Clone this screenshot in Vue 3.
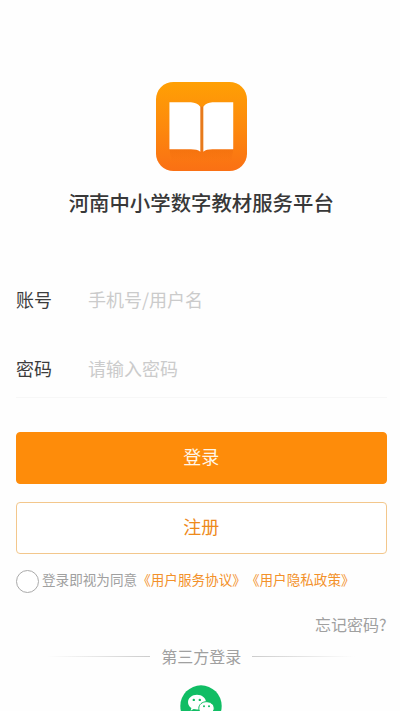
<script setup>
import { ref } from 'vue'

const account = ref('')
const password = ref('')
const agreed = ref(false)
</script>

<template>
  <main class="page">
    <header class="brand">
      <svg class="logo" viewBox="0 0 271 267" preserveAspectRatio="none">
        <defs>
          <linearGradient id="bg" x1="0" y1="0" x2="0" y2="1">
            <stop offset="0" stop-color="#ffa004" />
            <stop offset="0.45" stop-color="#fd8c0c" />
            <stop offset="1" stop-color="#fa7014" />
          </linearGradient>
          <linearGradient id="shade" x1="0" y1="0" x2="0" y2="1">
            <stop offset="0" stop-color="#e8620c" stop-opacity="0.4" />
            <stop offset="1" stop-color="#e8620c" stop-opacity="0" />
          </linearGradient>
        </defs>
        <rect width="271" height="267" rx="52" fill="url(#bg)" />
        <path d="M39 196H231L224 238H46Z" fill="url(#shade)" />
        <path d="M131 74H141V206H131Z" fill="#e77a1c" />
        <path d="M40 61H104Q122 62 132 74V209Q122 202 104 202H40Z" fill="#fff" />
        <path d="M230 61H168Q150 62 141 74V209Q150 202 168 202H230Z" fill="#fff" />
      </svg>
      <h1>河南中小学数字教材服务平台</h1>
    </header>

    <form class="form" @submit.prevent>
      <label class="field">
        <span>账号</span>
        <input v-model="account" type="text" placeholder="手机号/用户名" />
      </label>
      <label class="field lined">
        <span>密码</span>
        <input v-model="password" type="password" placeholder="请输入密码" />
      </label>
      <button class="btn primary" type="submit">登录</button>
      <button class="btn outline" type="button">注册</button>
    </form>

    <div class="agree">
      <button class="radio" :class="{ on: agreed }" type="button" @click="agreed = !agreed"></button>
      <p>登录即视为同意<a>《用户服务协议》</a><a>《用户隐私政策》</a></p>
    </div>
    <a class="forgot">忘记密码?</a>

    <div class="divider">
      <i class="line left"></i>
      <span>第三方登录</span>
      <i class="line right"></i>
    </div>
    <svg class="wechat" viewBox="0 0 42 42">
      <circle cx="21" cy="21" r="20.7" fill="#10bd64" />
      <path d="M17 9.800c-5 0-9 3.300-9 7.400 0 2.400 1.300 4.400 3.400 5.800l-.8 2.700 3.100-1.600c1 .3 2.100.5 3.300.5 5 0 9-3.300 9-7.400s-4-7.400-9-7.400Z" fill="#fff" />
      <path d="M26.500 16.700c-4.300 0-7.700 2.900-7.700 6.500s3.400 6.500 7.700 6.500c.9 0 1.800-.1 2.600-.4l2.600 1.400-.7-2.300c2-1.200 3.200-3.100 3.200-5.200 0-3.600-3.400-6.500-7.700-6.500Z" fill="#fff" stroke="#10bd64" stroke-width="1" />
      <g fill="#10bd64">
        <circle cx="13.800" cy="14.900" r="1.200" />
        <circle cx="19.800" cy="14.900" r="1.200" />
        <circle cx="24" cy="21.200" r="1" />
        <circle cx="29" cy="21.200" r="1" />
      </g>
    </svg>
  </main>
</template>

<style>
body {
  background: #fff;
  overflow: hidden;
}
</style>

<style scoped>
.page {
  box-sizing: border-box;
  display: flex;
  flex-direction: column;
  width: 400px;
  height: 711px;
  padding: 82px 13.5px 0 16px;
  overflow: hidden;
  background: #fefefe;
  font-family: "Noto Sans CJK SC", sans-serif;
}
.brand {
  display: flex;
  flex-direction: column;
  align-items: center;
  flex: none;
  height: 182px;
}
.logo {
  width: 91px;
  height: 89px;
}
h1 {
  margin: 16px 0 0;
  font-size: 20.4px;
  line-height: 30px;
  font-weight: 500;
  color: #383838;
  white-space: nowrap;
}
.form {
  display: flex;
  flex-direction: column;
  flex: none;
}
.field {
  box-sizing: border-box;
  display: flex;
  align-items: center;
  height: 70px;
  padding-bottom: 1px;
  font-size: 18px;
  color: #3c3c3c;
}
.field span {
  width: 72px;
}
.lined {
  height: 64px;
  padding-top: 6px;
  border-bottom: 1px solid #f7f7f7;
  margin-bottom: 34px;
}
input {
  flex: 1;
  min-width: 0;
  padding: 0;
  border: 0;
  outline: 0;
  background: none;
  font: inherit;
}
input::placeholder {
  color: #cbcbcb;
  opacity: 1;
}
.btn {
  box-sizing: border-box;
  height: 52px;
  padding: 0 0 5px;
  border: 1px solid #fe8c0a;
  border-radius: 4px;
  font-family: inherit;
  font-size: 18px;
}
.primary {
  background: #fe8c0a;
  color: #fff6e8;
}
.outline {
  margin-top: 18px;
  border-color: #f3c78c;
  background: #fff;
  color: #ee8a1c;
}
.agree {
  display: flex;
  align-items: center;
  flex: none;
  height: 24px;
  margin-top: 15px;
}
.radio {
  box-sizing: border-box;
  flex: none;
  width: 23px;
  height: 23px;
  padding: 0;
  border: 1px solid #aaa;
  border-radius: 50%;
  background: #fff;
}
.radio.on {
  background: #fe8c0a;
}
.agree p {
  margin: 0 0 5px 3px;
  font-size: 13.6px;
  line-height: 20px;
  color: #a0a0a0;
  white-space: nowrap;
  text-spacing-trim: space-all;
}
.agree a {
  color: #f3912a;
}
.forgot {
  align-self: flex-end;
  margin-top: 19px;
  font-size: 16px;
  line-height: 24px;
  color: #a0a0a0;
}
.divider {
  display: flex;
  align-items: center;
  justify-content: center;
  gap: 11px;
  margin-top: 8px;
  font-size: 16px;
  line-height: 24px;
  color: #a0a0a0;
}
.line {
  width: 103px;
  height: 1px;
  margin-top: 1px;
}
.left {
  background: linear-gradient(to right, transparent, #ccc);
}
.right {
  background: linear-gradient(to left, transparent, #ccc);
}
.wechat {
  align-self: center;
  flex: none;
  width: 42px;
  height: 42px;
  margin-top: 17px;
}
</style>
